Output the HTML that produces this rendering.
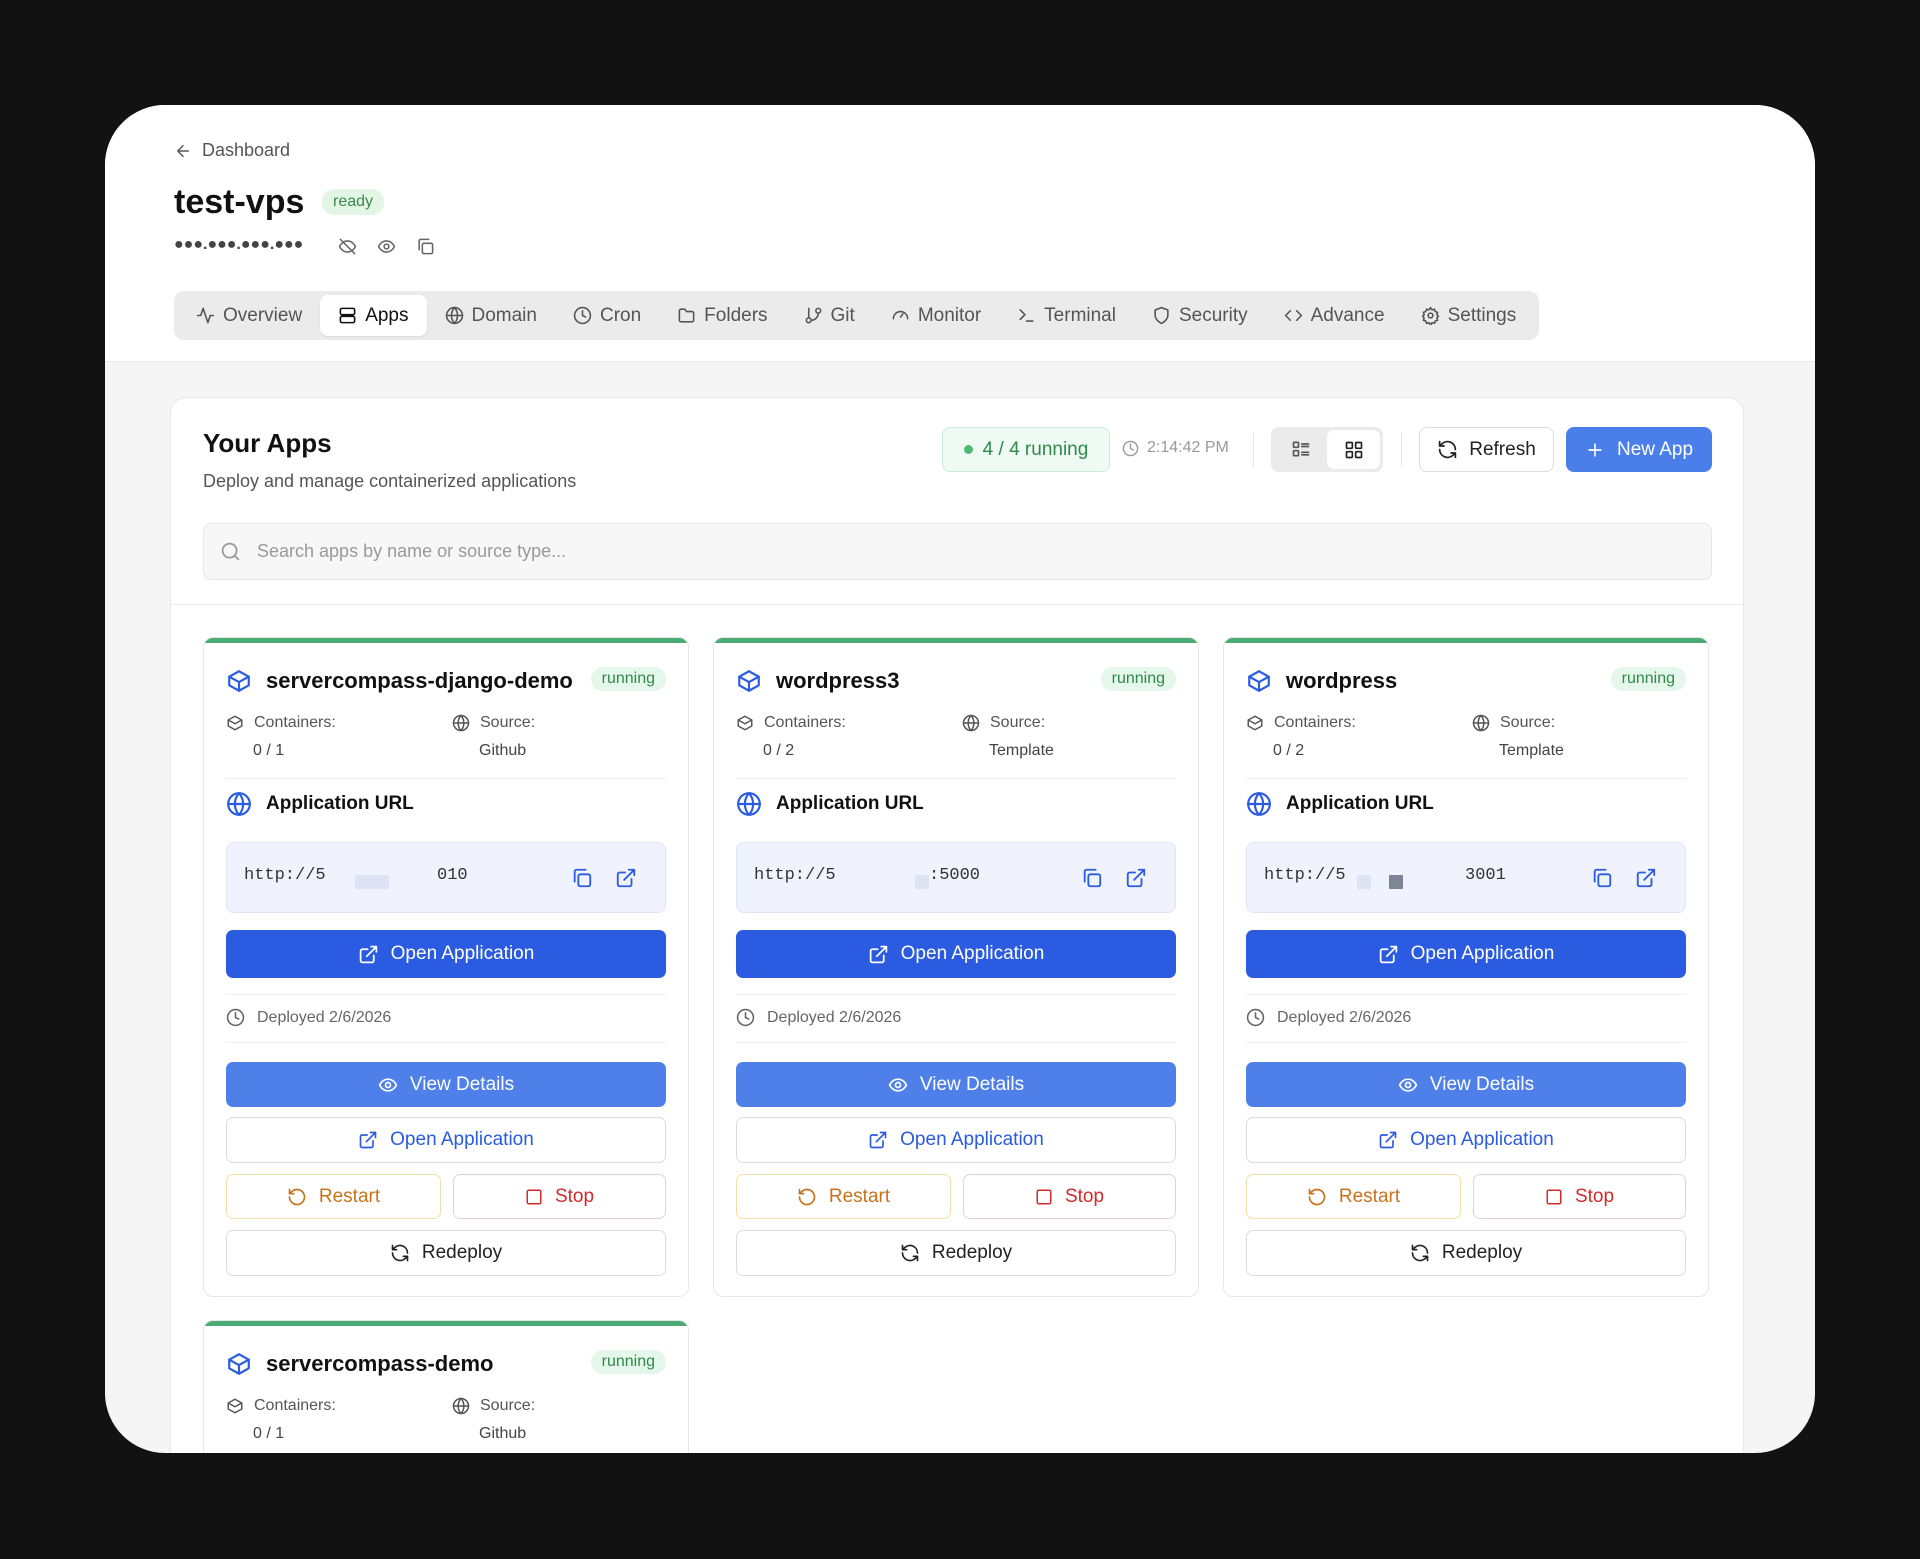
<!DOCTYPE html>
<html><head><meta charset="utf-8"><style>
*{box-sizing:border-box;margin:0;padding:0}
body{width:1920px;height:1559px;background:#121212;font-family:"Liberation Sans",sans-serif;position:relative;overflow:hidden;color:#1a1a1a}
.frame{position:absolute;left:105px;top:105px;width:1710px;height:1348px;border-radius:60px;overflow:hidden;background:#f5f5f5}
.head{position:absolute;left:0;top:0;width:100%;height:257px;background:#fff;border-bottom:1px solid #ececec}
.abs{position:absolute}
svg{display:inline-block;vertical-align:middle;fill:none;stroke:currentColor;stroke-width:2;stroke-linecap:round;stroke-linejoin:round}
.tabs{position:absolute;left:69px;top:186px;width:1365px;height:49px;background:#ebebeb;border-radius:10px;display:flex;align-items:center;padding:0 4px;gap:0}
.tab{display:flex;align-items:center;gap:8px;font-size:19px;color:#555;padding:0 18px;height:41px;border-radius:8px}
.tab.on{background:#fff;color:#111;box-shadow:0 1px 2px rgba(0,0,0,.08)}
.main{position:absolute;left:65px;top:292px;width:1574px;height:1100px;background:#fff;border:1px solid #e8e8e8;border-radius:16px}
.card{position:absolute;width:486px;height:660px;background:#fff;border:1px solid #e6e6e6;border-radius:10px;overflow:hidden}
.card .bar{position:absolute;left:0;top:0;right:0;height:5px;background:#4caa74}
.card .in{position:absolute;left:22px;right:22px}
.btn{position:absolute;left:22px;right:22px;display:flex;align-items:center;justify-content:center;gap:12px;font-size:19px;border-radius:7px}
.sm{font-size:16px;color:#555}
.runb{background:#e5f6ea;color:#2f8a4a;font-size:16px;border-radius:12px;padding:3px 11px}
.rs{right:247px!important}
.st{left:249px!important}
</style></head><body>
<div class="frame">
 <div class="head">
  <div class="abs" style="left:69px;top:35px;font-size:18px;color:#555;display:flex;align-items:center;gap:10px"><svg width="18" height="18" viewBox="0 0 24 24"><path d="M19 12H5M12 19l-7-7 7-7"/></svg>Dashboard</div>
  <div class="abs" style="left:69px;top:78px;font-size:34px;font-weight:bold;color:#111">test-vps</div>
  <div class="abs" style="left:217px;top:84px;background:#e3f6e6;color:#3b8a4c;font-size:16px;padding:4px 11px;border-radius:12px">ready</div>
  <div class="abs" style="left:69px;top:131px;font-size:16px;color:#444;font-weight:bold">●●●.●●●.●●●.●●●</div>
  <div class="abs" style="left:233px;top:132px;color:#666;display:flex;gap:20px">
   <svg width="19" height="19" viewBox="0 0 24 24"><path d="M2 12s3-7 10-7 10 7 10 7-3 7-10 7S2 12 2 12z"/><path d="M3 3l18 18"/></svg>
   <svg width="19" height="19" viewBox="0 0 24 24"><path d="M2 12s3-7 10-7 10 7 10 7-3 7-10 7S2 12 2 12z"/><circle cx="12" cy="12" r="3"/></svg>
   <svg width="19" height="19" viewBox="0 0 24 24"><rect x="8" y="8" width="13" height="13" rx="2"/><path d="M4 16V5a2 2 0 0 1 2-2h10"/></svg>
  </div>
  <div class="tabs">
   <div class="tab"><svg width="19" height="19" viewBox="0 0 24 24"><path d="M22 12h-4l-3 9L9 3l-3 9H2"/></svg>Overview</div>
   <div class="tab on"><svg width="19" height="19" viewBox="0 0 24 24"><rect x="3" y="3" width="18" height="8" rx="2"/><rect x="3" y="13" width="18" height="8" rx="2"/></svg>Apps</div>
   <div class="tab"><svg width="19" height="19" viewBox="0 0 24 24"><circle cx="12" cy="12" r="10"/><path d="M2 12h20M12 2a15 15 0 0 1 0 20M12 2a15 15 0 0 0 0 20"/></svg>Domain</div>
   <div class="tab"><svg width="19" height="19" viewBox="0 0 24 24"><circle cx="12" cy="12" r="10"/><path d="M12 6v6l4 2"/></svg>Cron</div>
   <div class="tab"><svg width="19" height="19" viewBox="0 0 24 24"><path d="M3 7v11a2 2 0 0 0 2 2h14a2 2 0 0 0 2-2V9a2 2 0 0 0-2-2h-7l-2-3H5a2 2 0 0 0-2 2z"/></svg>Folders</div>
   <div class="tab"><svg width="19" height="19" viewBox="0 0 24 24"><circle cx="18" cy="6" r="3"/><circle cx="6" cy="18" r="3"/><path d="M6 3v12M18 9a9 9 0 0 1-9 9"/></svg>Git</div>
   <div class="tab"><svg width="19" height="19" viewBox="0 0 24 24"><path d="M3 16a9 9 0 1 1 18 0M12 14l3-4"/></svg>Monitor</div>
   <div class="tab"><svg width="19" height="19" viewBox="0 0 24 24"><path d="M4 17l6-6-6-6M12 19h8"/></svg>Terminal</div>
   <div class="tab"><svg width="19" height="19" viewBox="0 0 24 24"><path d="M12 22s8-4 8-10V5l-8-3-8 3v7c0 6 8 10 8 10z"/></svg>Security</div>
   <div class="tab"><svg width="19" height="19" viewBox="0 0 24 24"><path d="M16 18l6-6-6-6M8 6l-6 6 6 6"/></svg>Advance</div>
   <div class="tab"><svg width="19" height="19" viewBox="0 0 24 24"><circle cx="12" cy="12" r="3"/><path d="M12 2l2 3 3-1 1 3 3 1-1 3 2 2-2 2 1 3-3 1-1 3-3-1-2 3-2-3-3 1-1-3-3-1 1-3-2-2 2-2-1-3 3-1 1-3 3 1z"/></svg>Settings</div>
  </div>
 </div>
 <div class="main">
  <div class="abs" style="left:32px;top:30px;font-size:26px;font-weight:bold;color:#111">Your Apps</div>
  <div class="abs" style="left:32px;top:73px;font-size:18px;color:#555">Deploy and manage containerized applications</div>
  <div class="abs" style="left:771px;top:29px;width:168px;height:45px;background:#eefaf3;border:1px solid #c9ecd6;border-radius:8px;display:flex;align-items:center;justify-content:center;gap:10px;color:#2f8a4a;font-size:19px"><span style="width:9px;height:9px;border-radius:50%;background:#4cba74"></span>4 / 4 running</div>
  <div class="abs" style="left:951px;top:41px;font-size:16px;color:#999;display:flex;align-items:center;gap:8px"><svg width="17" height="17" viewBox="0 0 24 24"><circle cx="12" cy="12" r="10"/><path d="M12 6v6l4 2"/></svg>2:14:42 PM</div>
  <div class="abs" style="left:1082px;top:35px;width:1px;height:34px;background:#e3e3e3"></div>
  <div class="abs" style="left:1100px;top:29px;width:112px;height:45px;background:#ebebeb;border-radius:8px">
   <div class="abs" style="left:20px;top:12px;color:#555"><svg width="20" height="20" viewBox="0 0 24 24"><rect x="3" y="4" width="6" height="6" rx="1"/><rect x="3" y="14" width="6" height="6" rx="1"/><path d="M13 6h8M13 9h8M13 16h8M13 19h8"/></svg></div>
   <div class="abs" style="left:56px;top:3px;width:53px;height:39px;background:#fff;border-radius:7px;display:flex;align-items:center;justify-content:center;color:#222"><svg width="20" height="20" viewBox="0 0 24 24"><rect x="3" y="3" width="7" height="7" rx="1"/><rect x="14" y="3" width="7" height="7" rx="1"/><rect x="3" y="14" width="7" height="7" rx="1"/><rect x="14" y="14" width="7" height="7" rx="1"/></svg></div>
  </div>
  <div class="abs" style="left:1230px;top:35px;width:1px;height:34px;background:#e3e3e3"></div>
  <div class="abs" style="left:1248px;top:29px;width:135px;height:45px;border:1px solid #ddd;border-radius:8px;display:flex;align-items:center;justify-content:center;gap:11px;font-size:19px;color:#222"><svg width="21" height="21" viewBox="0 0 24 24"><path d="M21 12a9 9 0 0 0-15-6.7L3 8M3 3v5h5M3 12a9 9 0 0 0 15 6.7L21 16M21 21v-5h-5"/></svg>Refresh</div>
  <div class="abs" style="left:1395px;top:29px;width:146px;height:45px;background:#4a7fe9;border-radius:8px;display:flex;align-items:center;justify-content:center;gap:12px;font-size:19px;color:#fff"><svg width="20" height="20" viewBox="0 0 24 24"><path d="M12 5v14M5 12h14"/></svg>New App</div>
  <div class="abs" style="left:32px;top:125px;width:1509px;height:57px;background:#f7f7f7;border:1px solid #e6e6e6;border-radius:8px;display:flex;align-items:center;padding-left:16px;gap:16px;font-size:18px;color:#999"><svg width="21" height="21" viewBox="0 0 24 24"><circle cx="11" cy="11" r="8"/><path d="M21 21l-4.3-4.3"/></svg>Search apps by name or source type...</div>
  <div class="abs" style="left:0;top:206px;width:100%;height:1px;background:#ececec"></div>

  <div class="card" style="left:32px;top:239px">
   <div class="bar"></div>
   <div class="in" style="top:30px;display:flex;align-items:center;gap:14px;color:#2a5be0"><svg width="26" height="26" viewBox="0 0 24 24"><path d="M21 8L12 3 3 8v8l9 5 9-5z"/><path d="M3 8l9 5 9-5M12 13v8"/></svg><span style="font-size:22px;font-weight:bold;color:#111">servercompass-django-demo</span></div>
   <div class="abs runb" style="right:22px;top:29px">running</div>
   <div class="in sm" style="top:76px;display:flex"><span style="width:226px;display:flex;gap:10px;align-items:center"><svg width="18" height="18" viewBox="0 0 24 24"><path d="M21 8L12 3 3 8v8l9 5 9-5zM3 8l9 5 9-5"/></svg>Containers:</span><span style="display:flex;gap:10px;align-items:center"><svg width="18" height="18" viewBox="0 0 24 24"><circle cx="12" cy="12" r="10"/><path d="M2 12h20M12 2a15 15 0 0 1 0 20M12 2a15 15 0 0 0 0 20"/></svg>Source:</span></div>
   <div class="in sm" style="top:104px;display:flex;color:#444"><span style="width:226px;padding-left:27px">0 / 1</span><span style="padding-left:27px">Github</span></div>
   <div class="in" style="top:140px;height:1px;background:#eee"></div>
   <div class="in" style="top:153px;display:flex;align-items:center;gap:14px;color:#2a5be0"><svg width="26" height="26" viewBox="0 0 24 24"><circle cx="12" cy="12" r="10"/><path d="M2 12h20M12 2a15 15 0 0 1 0 20M12 2a15 15 0 0 0 0 20"/></svg><span style="font-size:19px;font-weight:bold;color:#111">Application URL</span></div>
   <div class="in" style="top:204px;height:71px;background:#f0f3fd;border:1px solid #dfe5f5;border-radius:8px"><span class="abs" style="left:17px;top:23px;font-family:'Liberation Mono',monospace;font-size:17px;color:#333">http://5</span><span class="abs" style="left:128px;top:32px;width:34px;height:14px;background:#dfe3f5"></span><span class="abs" style="left:210px;top:23px;font-family:'Liberation Mono',monospace;font-size:17px;color:#333">010</span><span class="abs" style="right:72px;top:24px;color:#2a5be0"><svg width="22" height="22" viewBox="0 0 24 24"><rect x="8" y="8" width="13" height="13" rx="2"/><path d="M4 16V5a2 2 0 0 1 2-2h10"/></svg></span><span class="abs" style="right:28px;top:24px;color:#2a5be0"><svg width="22" height="22" viewBox="0 0 24 24"><path d="M18 13v6a2 2 0 0 1-2 2H5a2 2 0 0 1-2-2V8a2 2 0 0 1 2-2h6M15 3h6v6M10 14L21 3"/></svg></span></div>
   <div class="btn" style="top:292px;height:48px;background:#2a5be0;color:#fff"><svg width="21" height="21" viewBox="0 0 24 24"><path d="M18 13v6a2 2 0 0 1-2 2H5a2 2 0 0 1-2-2V8a2 2 0 0 1 2-2h6M15 3h6v6M10 14L21 3"/></svg>Open Application</div>
   <div class="in" style="top:356px;height:1px;background:#f2f2f2"></div>
   <div class="in sm" style="top:370px;display:flex;align-items:center;gap:12px;color:#666"><svg width="19" height="19" viewBox="0 0 24 24"><circle cx="12" cy="12" r="10"/><path d="M12 6v6l4 2"/></svg>Deployed 2/6/2026</div>
   <div class="in" style="top:404px;height:1px;background:#f2f2f2"></div>
   <div class="btn" style="top:424px;height:45px;background:#4f80ea;color:#fff"><svg width="20" height="20" viewBox="0 0 24 24"><path d="M2 12s3-7 10-7 10 7 10 7-3 7-10 7S2 12 2 12z"/><circle cx="12" cy="12" r="3"/></svg>View Details</div>
   <div class="btn" style="top:479px;height:46px;border:1px solid #dcdcdc;color:#2a5be0"><svg width="20" height="20" viewBox="0 0 24 24"><path d="M18 13v6a2 2 0 0 1-2 2H5a2 2 0 0 1-2-2V8a2 2 0 0 1 2-2h6M15 3h6v6M10 14L21 3"/></svg>Open Application</div>
   <div class="btn rs" style="top:536px;height:45px;border:1px solid #f3dfa8;color:#c7731c"><svg width="20" height="20" viewBox="0 0 24 24"><path d="M3 12a9 9 0 1 0 3-6.7L3 8M3 3v5h5"/></svg>Restart</div>
   <div class="btn st" style="top:536px;height:45px;border:1px solid #e9d0d0;color:#d02a2a"><svg width="18" height="18" viewBox="0 0 24 24"><rect x="3" y="3" width="18" height="18" rx="2"/></svg>Stop</div>
   <div class="btn" style="top:592px;height:46px;border:1px solid #dcdcdc;color:#222"><svg width="20" height="20" viewBox="0 0 24 24"><path d="M21 12a9 9 0 0 0-15-6.7L3 8M3 3v5h5M3 12a9 9 0 0 0 15 6.7L21 16M21 21v-5h-5"/></svg>Redeploy</div>
  </div>

  <div class="card" style="left:542px;top:239px">
   <div class="bar"></div>
   <div class="in" style="top:30px;display:flex;align-items:center;gap:14px;color:#2a5be0"><svg width="26" height="26" viewBox="0 0 24 24"><path d="M21 8L12 3 3 8v8l9 5 9-5z"/><path d="M3 8l9 5 9-5M12 13v8"/></svg><span style="font-size:22px;font-weight:bold;color:#111">wordpress3</span></div>
   <div class="abs runb" style="right:22px;top:29px">running</div>
   <div class="in sm" style="top:76px;display:flex"><span style="width:226px;display:flex;gap:10px;align-items:center"><svg width="18" height="18" viewBox="0 0 24 24"><path d="M21 8L12 3 3 8v8l9 5 9-5zM3 8l9 5 9-5"/></svg>Containers:</span><span style="display:flex;gap:10px;align-items:center"><svg width="18" height="18" viewBox="0 0 24 24"><circle cx="12" cy="12" r="10"/><path d="M2 12h20M12 2a15 15 0 0 1 0 20M12 2a15 15 0 0 0 0 20"/></svg>Source:</span></div>
   <div class="in sm" style="top:104px;display:flex;color:#444"><span style="width:226px;padding-left:27px">0 / 2</span><span style="padding-left:27px">Template</span></div>
   <div class="in" style="top:140px;height:1px;background:#eee"></div>
   <div class="in" style="top:153px;display:flex;align-items:center;gap:14px;color:#2a5be0"><svg width="26" height="26" viewBox="0 0 24 24"><circle cx="12" cy="12" r="10"/><path d="M2 12h20M12 2a15 15 0 0 1 0 20M12 2a15 15 0 0 0 0 20"/></svg><span style="font-size:19px;font-weight:bold;color:#111">Application URL</span></div>
   <div class="in" style="top:204px;height:71px;background:#f0f3fd;border:1px solid #dfe5f5;border-radius:8px"><span class="abs" style="left:17px;top:23px;font-family:'Liberation Mono',monospace;font-size:17px;color:#333">http://5</span><span class="abs" style="left:178px;top:32px;width:14px;height:14px;background:#dfe3f5"></span><span class="abs" style="left:192px;top:23px;font-family:'Liberation Mono',monospace;font-size:17px;color:#333">:5000</span><span class="abs" style="right:72px;top:24px;color:#2a5be0"><svg width="22" height="22" viewBox="0 0 24 24"><rect x="8" y="8" width="13" height="13" rx="2"/><path d="M4 16V5a2 2 0 0 1 2-2h10"/></svg></span><span class="abs" style="right:28px;top:24px;color:#2a5be0"><svg width="22" height="22" viewBox="0 0 24 24"><path d="M18 13v6a2 2 0 0 1-2 2H5a2 2 0 0 1-2-2V8a2 2 0 0 1 2-2h6M15 3h6v6M10 14L21 3"/></svg></span></div>
   <div class="btn" style="top:292px;height:48px;background:#2a5be0;color:#fff"><svg width="21" height="21" viewBox="0 0 24 24"><path d="M18 13v6a2 2 0 0 1-2 2H5a2 2 0 0 1-2-2V8a2 2 0 0 1 2-2h6M15 3h6v6M10 14L21 3"/></svg>Open Application</div>
   <div class="in" style="top:356px;height:1px;background:#f2f2f2"></div>
   <div class="in sm" style="top:370px;display:flex;align-items:center;gap:12px;color:#666"><svg width="19" height="19" viewBox="0 0 24 24"><circle cx="12" cy="12" r="10"/><path d="M12 6v6l4 2"/></svg>Deployed 2/6/2026</div>
   <div class="in" style="top:404px;height:1px;background:#f2f2f2"></div>
   <div class="btn" style="top:424px;height:45px;background:#4f80ea;color:#fff"><svg width="20" height="20" viewBox="0 0 24 24"><path d="M2 12s3-7 10-7 10 7 10 7-3 7-10 7S2 12 2 12z"/><circle cx="12" cy="12" r="3"/></svg>View Details</div>
   <div class="btn" style="top:479px;height:46px;border:1px solid #dcdcdc;color:#2a5be0"><svg width="20" height="20" viewBox="0 0 24 24"><path d="M18 13v6a2 2 0 0 1-2 2H5a2 2 0 0 1-2-2V8a2 2 0 0 1 2-2h6M15 3h6v6M10 14L21 3"/></svg>Open Application</div>
   <div class="btn rs" style="top:536px;height:45px;border:1px solid #f3dfa8;color:#c7731c"><svg width="20" height="20" viewBox="0 0 24 24"><path d="M3 12a9 9 0 1 0 3-6.7L3 8M3 3v5h5"/></svg>Restart</div>
   <div class="btn st" style="top:536px;height:45px;border:1px solid #e9d0d0;color:#d02a2a"><svg width="18" height="18" viewBox="0 0 24 24"><rect x="3" y="3" width="18" height="18" rx="2"/></svg>Stop</div>
   <div class="btn" style="top:592px;height:46px;border:1px solid #dcdcdc;color:#222"><svg width="20" height="20" viewBox="0 0 24 24"><path d="M21 12a9 9 0 0 0-15-6.7L3 8M3 3v5h5M3 12a9 9 0 0 0 15 6.7L21 16M21 21v-5h-5"/></svg>Redeploy</div>
  </div>

  <div class="card" style="left:1052px;top:239px">
   <div class="bar"></div>
   <div class="in" style="top:30px;display:flex;align-items:center;gap:14px;color:#2a5be0"><svg width="26" height="26" viewBox="0 0 24 24"><path d="M21 8L12 3 3 8v8l9 5 9-5z"/><path d="M3 8l9 5 9-5M12 13v8"/></svg><span style="font-size:22px;font-weight:bold;color:#111">wordpress</span></div>
   <div class="abs runb" style="right:22px;top:29px">running</div>
   <div class="in sm" style="top:76px;display:flex"><span style="width:226px;display:flex;gap:10px;align-items:center"><svg width="18" height="18" viewBox="0 0 24 24"><path d="M21 8L12 3 3 8v8l9 5 9-5zM3 8l9 5 9-5"/></svg>Containers:</span><span style="display:flex;gap:10px;align-items:center"><svg width="18" height="18" viewBox="0 0 24 24"><circle cx="12" cy="12" r="10"/><path d="M2 12h20M12 2a15 15 0 0 1 0 20M12 2a15 15 0 0 0 0 20"/></svg>Source:</span></div>
   <div class="in sm" style="top:104px;display:flex;color:#444"><span style="width:226px;padding-left:27px">0 / 2</span><span style="padding-left:27px">Template</span></div>
   <div class="in" style="top:140px;height:1px;background:#eee"></div>
   <div class="in" style="top:153px;display:flex;align-items:center;gap:14px;color:#2a5be0"><svg width="26" height="26" viewBox="0 0 24 24"><circle cx="12" cy="12" r="10"/><path d="M2 12h20M12 2a15 15 0 0 1 0 20M12 2a15 15 0 0 0 0 20"/></svg><span style="font-size:19px;font-weight:bold;color:#111">Application URL</span></div>
   <div class="in" style="top:204px;height:71px;background:#f0f3fd;border:1px solid #dfe5f5;border-radius:8px"><span class="abs" style="left:17px;top:23px;font-family:'Liberation Mono',monospace;font-size:17px;color:#333">http://5</span><span class="abs" style="left:110px;top:32px;width:14px;height:14px;background:#dfe3f5"></span><span class="abs" style="left:142px;top:32px;width:14px;height:14px;background:#7f8597"></span><span class="abs" style="left:218px;top:23px;font-family:'Liberation Mono',monospace;font-size:17px;color:#333">3001</span><span class="abs" style="right:72px;top:24px;color:#2a5be0"><svg width="22" height="22" viewBox="0 0 24 24"><rect x="8" y="8" width="13" height="13" rx="2"/><path d="M4 16V5a2 2 0 0 1 2-2h10"/></svg></span><span class="abs" style="right:28px;top:24px;color:#2a5be0"><svg width="22" height="22" viewBox="0 0 24 24"><path d="M18 13v6a2 2 0 0 1-2 2H5a2 2 0 0 1-2-2V8a2 2 0 0 1 2-2h6M15 3h6v6M10 14L21 3"/></svg></span></div>
   <div class="btn" style="top:292px;height:48px;background:#2a5be0;color:#fff"><svg width="21" height="21" viewBox="0 0 24 24"><path d="M18 13v6a2 2 0 0 1-2 2H5a2 2 0 0 1-2-2V8a2 2 0 0 1 2-2h6M15 3h6v6M10 14L21 3"/></svg>Open Application</div>
   <div class="in" style="top:356px;height:1px;background:#f2f2f2"></div>
   <div class="in sm" style="top:370px;display:flex;align-items:center;gap:12px;color:#666"><svg width="19" height="19" viewBox="0 0 24 24"><circle cx="12" cy="12" r="10"/><path d="M12 6v6l4 2"/></svg>Deployed 2/6/2026</div>
   <div class="in" style="top:404px;height:1px;background:#f2f2f2"></div>
   <div class="btn" style="top:424px;height:45px;background:#4f80ea;color:#fff"><svg width="20" height="20" viewBox="0 0 24 24"><path d="M2 12s3-7 10-7 10 7 10 7-3 7-10 7S2 12 2 12z"/><circle cx="12" cy="12" r="3"/></svg>View Details</div>
   <div class="btn" style="top:479px;height:46px;border:1px solid #dcdcdc;color:#2a5be0"><svg width="20" height="20" viewBox="0 0 24 24"><path d="M18 13v6a2 2 0 0 1-2 2H5a2 2 0 0 1-2-2V8a2 2 0 0 1 2-2h6M15 3h6v6M10 14L21 3"/></svg>Open Application</div>
   <div class="btn rs" style="top:536px;height:45px;border:1px solid #f3dfa8;color:#c7731c"><svg width="20" height="20" viewBox="0 0 24 24"><path d="M3 12a9 9 0 1 0 3-6.7L3 8M3 3v5h5"/></svg>Restart</div>
   <div class="btn st" style="top:536px;height:45px;border:1px solid #e9d0d0;color:#d02a2a"><svg width="18" height="18" viewBox="0 0 24 24"><rect x="3" y="3" width="18" height="18" rx="2"/></svg>Stop</div>
   <div class="btn" style="top:592px;height:46px;border:1px solid #dcdcdc;color:#222"><svg width="20" height="20" viewBox="0 0 24 24"><path d="M21 12a9 9 0 0 0-15-6.7L3 8M3 3v5h5M3 12a9 9 0 0 0 15 6.7L21 16M21 21v-5h-5"/></svg>Redeploy</div>
  </div>

  <div class="card" style="left:32px;top:922px">
   <div class="bar"></div>
   <div class="in" style="top:30px;display:flex;align-items:center;gap:14px;color:#2a5be0"><svg width="26" height="26" viewBox="0 0 24 24"><path d="M21 8L12 3 3 8v8l9 5 9-5z"/><path d="M3 8l9 5 9-5M12 13v8"/></svg><span style="font-size:22px;font-weight:bold;color:#111">servercompass-demo</span></div>
   <div class="abs runb" style="right:22px;top:29px">running</div>
   <div class="in sm" style="top:76px;display:flex"><span style="width:226px;display:flex;gap:10px;align-items:center"><svg width="18" height="18" viewBox="0 0 24 24"><path d="M21 8L12 3 3 8v8l9 5 9-5zM3 8l9 5 9-5"/></svg>Containers:</span><span style="display:flex;gap:10px;align-items:center"><svg width="18" height="18" viewBox="0 0 24 24"><circle cx="12" cy="12" r="10"/><path d="M2 12h20M12 2a15 15 0 0 1 0 20M12 2a15 15 0 0 0 0 20"/></svg>Source:</span></div>
   <div class="in sm" style="top:104px;display:flex;color:#444"><span style="width:226px;padding-left:27px">0 / 1</span><span style="padding-left:27px">Github</span></div>
  </div>
 </div>
</div>
</body></html>
